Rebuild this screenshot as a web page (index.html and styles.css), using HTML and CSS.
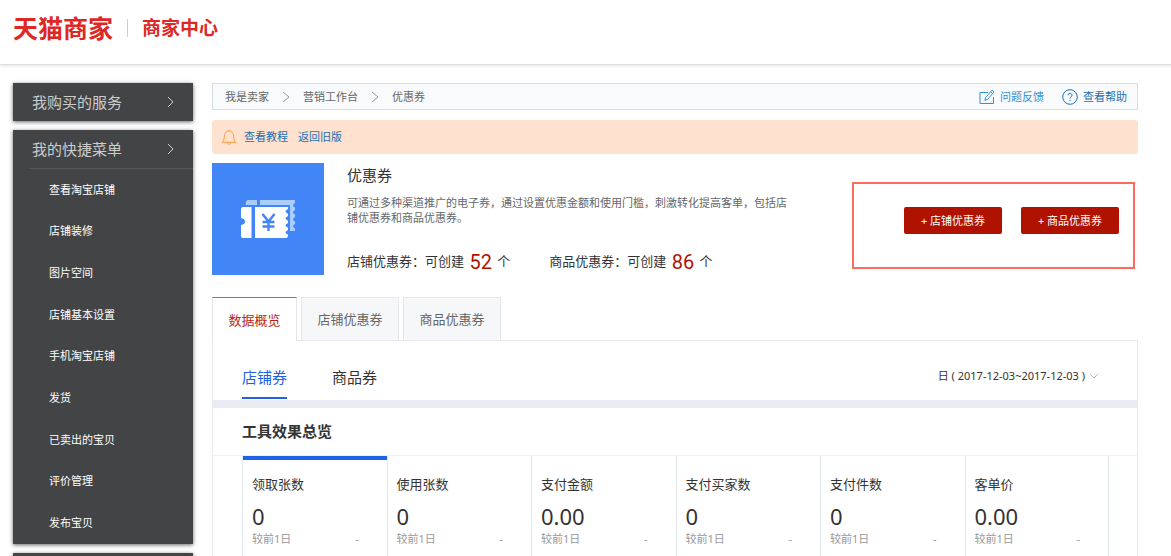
FILE: index.html
```html
<!DOCTYPE html>
<html lang="zh-CN">
<head>
<meta charset="utf-8">
<meta name="viewport" content="width=device-width, initial-scale=1">
<title>商家中心</title>
<link rel="stylesheet" href="styles.css">
</head>
<body>
<div class="page">
  <header class="header">
    <a class="logo" href="#">天猫商家</a>
    <a class="site" href="#">商家中心</a>
  </header>
  <div class="layout">
    <aside class="sidebar">
      <section class="block">
        <a class="block-head" href="#">我购买的服务<svg class="chev" viewBox="0 0 7 12"><path d="M1 1l5 5-5 5"/></svg></a>
      </section>
      <section class="block">
        <a class="block-head" href="#">我的快捷菜单<svg class="chev" viewBox="0 0 7 12"><path d="M1 1l5 5-5 5"/></svg></a>
        <nav class="menu">
          <a href="#">查看淘宝店铺</a>
          <a href="#">店铺装修</a>
          <a href="#">图片空间</a>
          <a href="#">店铺基本设置</a>
          <a href="#">手机淘宝店铺</a>
          <a href="#">发货</a>
          <a href="#">已卖出的宝贝</a>
          <a href="#">评价管理</a>
          <a href="#">发布宝贝</a>
        </nav>
      </section>
      <section class="block block-next"></section>
    </aside>

    <main class="content">
      <div class="topbar">
        <nav class="crumbs">
          <a href="#">我是卖家</a>
          <svg class="sep" viewBox="0 0 8 12"><path d="M1 1l6 5-6 5"/></svg>
          <a href="#">营销工作台</a>
          <svg class="sep" viewBox="0 0 8 12"><path d="M1 1l6 5-6 5"/></svg>
          <span>优惠券</span>
        </nav>
        <div class="tools">
          <a class="tool feedback" href="#"><svg class="icon" viewBox="0 0 16 16"><path d="M9 3.500H1v11h13.500V8"/><path d="M6.500 8.700L13 1.200l2 1.800-6.400 7.400-2.800.9zM11.600 2.800l2 1.800"/></svg>问题反馈</a>
          <a class="tool help" href="#"><svg class="icon" viewBox="0 0 16 16"><circle cx="8" cy="8" r="7.300"/><path d="M6 6.300c0-2.700 4-2.500 4 0 0 1.600-2 1.600-2 3.300M8 10.900v1.200"/></svg>查看帮助</a>
        </div>
      </div>

      <div class="notice">
        <svg class="icon bell" viewBox="0 0 16 16"><path d="M8 .5v1.300M1 13.300h14c-1.600-1.400-2-2.500-2.200-4.800C12.500 4.300 11 2 8 2S3.500 4.300 3.200 8.500C3 10.800 2.600 11.900 1 13.300zM6.300 13.500c.2 2.300 3.200 2.300 3.400 0"/></svg>
        <a href="#">查看教程</a>
        <a href="#">返回旧版</a>
      </div>

      <section class="hero">
        <div class="hero-pic">
          <svg class="coupon" viewBox="0 0 54 38">
            <path fill="#a9cdff" d="M7 0h9v5H4.500Q5 0 7 0zM19 0h35v3q-4 2 0 4.500v2.500q-4 2 0 4.500V17q-4 2 0 4.500V24q-4 2 0 4.500V31h-5V5H19z"/>
            <path fill="#fff" d="M2 7h8.500v31H2q-2 0-2-2V25q4-.5 4-3.500T0 18V9q0-2 2-2zM14 7h33v2q-5 2.300 0 4.800v2.200q-5 2.300 0 4.800V23q-5 2.300 0 4.800V30q-5 2.300 0 4.800Q47 38 45 38H14z"/>
            <path fill="none" stroke="#4285f7" stroke-width="2.400" d="M21.500 14l6 7.500 6-7.500M27.500 21v10M21.500 22h12M21.500 26.500h12"/>
          </svg>
        </div>
        <div class="hero-info">
          <h1>优惠券</h1>
          <p class="desc">可通过多种渠道推广的电子券，通过设置优惠金额和使用门槛，刺激转化提高客单，包括店铺优惠券和商品优惠券。</p>
          <div class="quota">
            <span>店铺优惠券：可创建 <b>52</b> 个</span>
            <span>商品优惠券：可创建 <b>86</b> 个</span>
          </div>
        </div>
        <div class="actions">
          <button type="button">+ 店铺优惠券</button>
          <button type="button">+ 商品优惠券</button>
        </div>
      </section>

      <div class="tabs">
        <button type="button" class="tab active">数据概览</button>
        <button type="button" class="tab">店铺优惠券</button>
        <button type="button" class="tab">商品优惠券</button>
      </div>
      <section class="panel">
        <div class="subbar">
          <div class="subtabs">
            <button type="button" class="subtab active">店铺券</button>
            <button type="button" class="subtab">商品券</button>
          </div>
          <button type="button" class="date">日 ( 2017-12-03~2017-12-03 )<svg class="down" viewBox="0 0 10 6"><path d="M1 1l4 4 4-4"/></svg></button>
        </div>
        <h2>工具效果总览</h2>
        <div class="stats">
          <article class="stat active"><h3>领取张数</h3><strong>0</strong><p><span>较前1日</span><span>-</span></p></article>
          <article class="stat"><h3>使用张数</h3><strong>0</strong><p><span>较前1日</span><span>-</span></p></article>
          <article class="stat"><h3>支付金额</h3><strong>0.00</strong><p><span>较前1日</span><span>-</span></p></article>
          <article class="stat"><h3>支付买家数</h3><strong>0</strong><p><span>较前1日</span><span>-</span></p></article>
          <article class="stat"><h3>支付件数</h3><strong>0</strong><p><span>较前1日</span><span>-</span></p></article>
          <article class="stat"><h3>客单价</h3><strong>0.00</strong><p><span>较前1日</span><span>-</span></p></article>
        </div>
      </section>
    </main>
  </div>
</div>
</body>
</html>
```

FILE: styles.css
```css
* { box-sizing: border-box; }
body {
  margin: 0;
  background: #fff;
  color: #333;
  font: 11px/16px "Noto Sans", "Noto Sans CJK SC", sans-serif;
}
a { color: inherit; text-decoration: none; }
button { font: inherit; color: inherit; background: none; border: 0; padding: 0; cursor: pointer; }
h1, h2, h3, p { margin: 0; font-weight: 400; }
svg { fill: none; stroke: currentColor; flex: none; }

.page { display: flex; flex-direction: column; height: 100vh; overflow: hidden; }

.header {
  display: flex;
  align-items: center;
  flex: none;
  height: 65px;
  padding: 0 13px 9px;
  border-bottom: 1px solid #e0e0e0;
  box-shadow: 0 1px 3px rgba(0, 0, 0, .12);
  color: #de2826;
  font-weight: 700;
}
.logo { font-size: 25px; line-height: 32px; }
.site {
  margin-left: 14px;
  padding-left: 14px;
  font-size: 19px;
  line-height: 18px;
  border-left: 1px solid #ccc;
}

.layout { display: flex; flex: 1; gap: 19px; min-height: 0; padding: 18px 33px 0 13px; }

.sidebar { display: flex; flex-direction: column; flex: none; gap: 9px; width: 180px; }
.block { flex: none; background: #434445; box-shadow: 0 1px 4px rgba(0, 0, 0, .6); color: #fff; }
.block-head {
  display: flex;
  align-items: center;
  justify-content: space-between;
  height: 38px;
  padding: 0 19px;
  color: #ccc;
  font-size: 15px;
}
.block-next { height: 38px; }
.chev { width: 7px; height: 12px; }
.menu {
  display: grid;
  grid-auto-rows: 1fr;
  align-items: center;
  min-height: 376px;
  margin-left: 16px;
  padding-left: 20px;
  border-top: 1px solid #555657;
}

.content { flex: 1; min-width: 0; }
.topbar {
  display: flex;
  align-items: center;
  justify-content: space-between;
  height: 27px;
  padding: 0 10px 0 12px;
  border: 1px solid #d2e1e8;
  background: #f8fafc;
  color: #666;
}
.crumbs, .tools, .tool { display: flex; align-items: center; }
.crumbs { gap: 13px; }
.sep { width: 8px; height: 12px; color: #999; }
.tools { gap: 18px; }
.tool { gap: 5px; }
.icon { width: 16px; height: 16px; }
.feedback { color: #3191d3; }
.help { color: #1e6fb0; }

.notice {
  display: flex;
  align-items: center;
  gap: 10px;
  height: 34px;
  margin-top: 10px;
  padding: 0 9px;
  border-radius: 3px;
  background: #ffe1cf;
  color: #1b6fae;
}
.bell { color: #ff9d3c; margin-right: -3px; }

.hero { display: flex; margin-top: 9px; padding-right: 3px; }
.hero-pic {
  display: flex;
  align-items: center;
  justify-content: center;
  flex: none;
  width: 112px;
  height: 112px;
  background: #4285f7;
}
.coupon { width: 54px; height: 38px; stroke: none; }
.hero-info { flex: 0 1 447px; margin: 0 auto 0 23px; }
.hero-info h1 { font-size: 15px; line-height: 24px; }
.desc { margin-top: 8px; line-height: 15px; color: #666; }
.quota { display: flex; gap: 39px; margin-top: 23px; font-size: 13px; line-height: 26px; white-space: nowrap; }
.quota b { margin: 0 2px; font: 400 20px/26px Roboto, sans-serif; color: #b01200; vertical-align: -3px; }
.actions {
  display: flex;
  justify-content: flex-end;
  align-items: flex-start;
  flex: none;
  gap: 19px;
  height: 87px;
  margin-top: 19px;
  padding: 23px 14px 0 50px;
  border: 2px solid #ff6a5e;
}
.actions button { width: 98px; height: 27px; border-radius: 2px; background: #b01200; color: #fff; }

.tabs { display: flex; gap: 4px; height: 43px; margin-top: 22px; }
.tab {
  min-width: 98px;
  padding: 0 15px;
  border: 1px solid #e3e6ea;
  border-bottom: 0;
  background: #f6f7f9;
  color: #666;
  font-size: 13px;
}
.tab.active {
  min-width: 85px;
  margin-bottom: -1px;
  border-top-color: #cf5a50;
  background: #fff;
  color: #b8261b;
  z-index: 1;
}

.panel { border: 1px solid #e9ebee; border-bottom: 0; }
.subbar {
  display: flex;
  justify-content: space-between;
  align-items: flex-start;
  height: 67px;
  padding: 0 38px 0 29px;
  border-bottom: 8px solid #e9edf3;
}
.subtabs { display: flex; gap: 45px; }
.subtab { padding: 20px 0 4px; border-bottom: 2px solid transparent; font-size: 15px; line-height: 32px; }
.subtab.active { border-color: #2062e6; color: #2062e6; }
.date { display: flex; align-items: center; gap: 4px; height: 70px; }
.down { width: 10px; height: 6px; color: #a9bfd0; }
.panel h2 { padding: 0 29px; font-size: 15px; line-height: 47px; font-weight: 700; }
.stats {
  display: grid;
  grid-template-columns: repeat(6, 1fr);
  padding: 0 28px 0 29px;
  border-top: 1px solid #edeff1;
}
.stat { padding: 18px 28px 60px 9px; border-left: 1px solid #e0e7f0; }
.stat:last-child { border-right: 1px solid #e0e7f0; }
.stat.active { box-shadow: inset 0 4px #2062e6; }
.stat h3 { font-size: 13px; line-height: 20px; }
.stat strong { display: block; margin-top: 7px; font-size: 22px; line-height: 30px; font-weight: 400; }
.stat p { display: flex; justify-content: space-between; color: #999; }
```
